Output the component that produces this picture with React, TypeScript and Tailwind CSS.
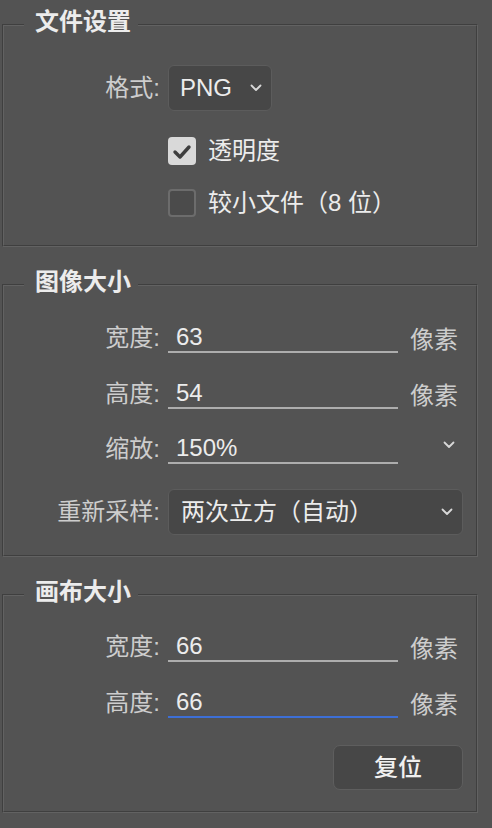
import React from 'react';

const Chevron: React.FC<{ className?: string }> = ({ className = '' }) => (
  <svg width="12" height="8" viewBox="0 0 12 8" className={className}>
    <path d="M1.5 1.5 L6 6 L10.5 1.5" fill="none" stroke="#d8d8d8" strokeWidth="1.8" strokeLinecap="round" strokeLinejoin="round" />
  </svg>
);

const Section: React.FC<{ title: string; height: string; children: React.ReactNode }> = ({ title, height, children }) => (
  <div
    className={`relative ml-[2px] w-[476px] ${height} border border-t-[#3f3f3f] border-l-[#3f3f3f] border-r-[#626262] border-b-[#626262]`}
  >
    <div className="h-full border border-t-[#626262] border-l-[#626262] border-r-[#3f3f3f] border-b-[#3f3f3f] flex flex-col">
      {children}
    </div>
    <div className="absolute -top-[17px] left-[21px] bg-[#535353] pl-[11px] pr-[7px] text-[24px] leading-[28px] font-bold text-[#ececec]">
      {title}
    </div>
  </div>
);

const Label: React.FC<{ text: string }> = ({ text }) => (
  <div className="w-[156px] shrink-0 text-right text-[24px] leading-[28px] text-[#cdcdcd]">{text}</div>
);

const FieldRow: React.FC<{ label: string; value: string; unit?: string; chevron?: boolean; active?: boolean; mt: string }> = ({
  label,
  value,
  unit,
  chevron,
  active,
  mt,
}) => (
  <div className={`flex items-center ${mt}`}>
    <Label text={label} />
    <div
      className={`ml-[8px] w-[230px] h-[30px] border-b-2 ${active ? 'border-[#3d6fd6]' : 'border-[#adadad]'} pl-[8px] text-[24px] leading-[28px] text-[#ececec]`}
    >
      {value}
    </div>
    <div className="ml-[12px] flex-1 text-[24px] leading-[28px] text-[#cdcdcd] pt-[4px]">
      {unit}
      {chevron && <Chevron className="ml-[33px] -mt-[10px]" />}
    </div>
  </div>
);

export default function App() {
  return (
    <div className="w-[492px] h-[828px] bg-[#535353] pt-[24px] font-['Liberation_Sans','Noto_Sans_CJK_SC',sans-serif] overflow-hidden">
      <Section title="文件设置" height="h-[223px]">
        <div className="flex items-center mt-[39px]">
          <Label text="格式:" />
          <div className="ml-[8px] w-[104px] h-[46px] rounded-[6px] bg-[#474747] border border-[#5c5c5c] flex items-center pl-[11px] pr-[9px] justify-between">
            <span className="text-[24px] leading-[28px] text-[#ececec]">PNG</span>
            <Chevron />
          </div>
        </div>
        <div className="flex items-center mt-[26px] ml-[164px]">
          <div className="w-[28px] h-[28px] rounded-[4px] bg-[#d9d9d9] flex items-center justify-center">
            <svg width="28" height="28" viewBox="0 0 28 28">
              <path d="M7 15 L12 20 L21 10" fill="none" stroke="#3e3e3e" strokeWidth="3.4" strokeLinecap="round" strokeLinejoin="round" />
            </svg>
          </div>
          <span className="ml-[12px] text-[24px] leading-[28px] text-[#ececec]">透明度</span>
        </div>
        <div className="flex items-center mt-[24px] ml-[164px]">
          <div className="w-[28px] h-[28px] rounded-[4px] bg-[#4b4b4b] border-2 border-[#6c6c6c]" />
          <span className="ml-[12px] text-[24px] leading-[28px] text-[#ececec]">较小文件（8 位）</span>
        </div>
      </Section>

      <div className="h-[37px]" />

      <Section title="图像大小" height="h-[273px]">
        <FieldRow label="宽度:" value="63" unit="像素" mt="mt-[36px]" />
        <FieldRow label="高度:" value="54" unit="像素" mt="mt-[24px]" />
        <FieldRow label="缩放:" value="150%" chevron mt="mt-[24px]" />
        <div className="flex items-center mt-[25px]">
          <Label text="重新采样:" />
          <div className="ml-[8px] w-[295px] h-[46px] rounded-[6px] bg-[#474747] border border-[#5c5c5c] flex items-center pl-[12px] pr-[9px] justify-between">
            <span className="text-[24px] leading-[28px] text-[#ececec]">两次立方（自动）</span>
            <Chevron />
          </div>
        </div>
      </Section>

      <div className="h-[37px]" />

      <Section title="画布大小" height="h-[219px]">
        <FieldRow label="宽度:" value="66" unit="像素" mt="mt-[35px]" />
        <FieldRow label="高度:" value="66" unit="像素" active mt="mt-[24px]" />
        <div className="mt-[26px] ml-[329px]">
          <button className="w-[130px] h-[45px] rounded-[7px] bg-[#474747] border border-[#5e5e5e] text-[24px] leading-[28px] font-medium text-[#f0f0f0]">
            复位
          </button>
        </div>
      </Section>
    </div>
  );
}
